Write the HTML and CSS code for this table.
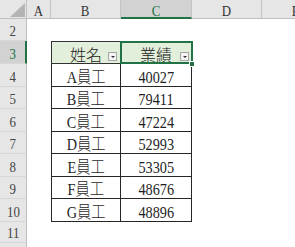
FILE: index.html
```html
<!DOCTYPE html>
<html lang="zh-Hant">
<head>
<meta charset="utf-8">
<title>Sheet</title>
<link rel="stylesheet" href="styles.css">
</head>
<body>
<div class="sheet">
  <div class="corner"><svg width="15" height="14" viewBox="0 0 15 14"><polygon points="15,0 15,14 0,14" fill="#b4b4b4"/></svg></div>
  <div class="ch"><span class="s">A</span></div>
  <div class="ch"><span class="s">B</span></div>
  <div class="ch sel"><span class="s">C</span></div>
  <div class="ch"><span class="s">D</span></div>
  <div class="ch"><span class="s">E</span></div>

  <div class="rh"><span class="s">2</span></div>
  <div></div><div></div><div></div><div></div><div></div>

  <div class="rh sel"><span class="s">3</span></div>
  <div></div>
  <div class="th first"><span>姓名</span><span class="dd"></span></div>
  <div class="th active"><span>業績</span><span class="dd"></span></div>
  <div></div><div></div>

  <div class="rh"><span class="s">4</span></div>
  <div></div>
  <div class="td first"><span class="t">A員工</span></div>
  <div class="td"><span class="t">40027</span></div>
  <div></div><div></div>

  <div class="rh"><span class="s">5</span></div>
  <div></div>
  <div class="td first"><span class="t">B員工</span></div>
  <div class="td"><span class="t">79411</span></div>
  <div></div><div></div>

  <div class="rh"><span class="s">6</span></div>
  <div></div>
  <div class="td first"><span class="t">C員工</span></div>
  <div class="td"><span class="t">47224</span></div>
  <div></div><div></div>

  <div class="rh"><span class="s">7</span></div>
  <div></div>
  <div class="td first"><span class="t">D員工</span></div>
  <div class="td"><span class="t">52993</span></div>
  <div></div><div></div>

  <div class="rh"><span class="s">8</span></div>
  <div></div>
  <div class="td first"><span class="t">E員工</span></div>
  <div class="td"><span class="t">53305</span></div>
  <div></div><div></div>

  <div class="rh"><span class="s">9</span></div>
  <div></div>
  <div class="td first"><span class="t">F員工</span></div>
  <div class="td"><span class="t">48676</span></div>
  <div></div><div></div>

  <div class="rh"><span class="s">10</span></div>
  <div></div>
  <div class="td first"><span class="t">G員工</span></div>
  <div class="td"><span class="t">48896</span></div>
  <div></div><div></div>

  <div class="rh"><span class="s">11</span></div>
  <div></div><div></div><div></div><div></div><div></div>

  <div class="rh"></div>
  <div></div><div></div><div></div><div></div><div></div>
</div>
</body>
</html>
```
FILE: styles.css
```css
* { box-sizing: border-box; }
html, body {
  margin: 0;
  padding: 0;
  background: #ffffff;
  overflow: hidden;
}
.sheet {
  display: grid;
  grid-template-columns: 27px 24px 70px 71px 70px 68px;
  grid-template-rows: 19px 22px 23px 23px 22px 23px 22px 23px 22px 23px 21px 22px;
  width: 330px;
  font-family: "Liberation Serif", "Noto Sans CJK TC", serif;
}
.corner {
  background: #e6e6e6;
  border-right: 1px solid #bfbfbf;
  border-bottom: 1px solid #bfbfbf;
  display: flex;
  justify-content: flex-end;
  align-items: flex-end;
  padding: 0 1px 1px 0;
}
.corner svg { display: block; }
.s {
  display: inline-block;
  transform: scaleX(0.86);
}
.ch {
  background: #e6e6e6;
  border-right: 1px solid #c4c4c4;
  border-bottom: 1px solid #bfbfbf;
  color: #333333;
  font-size: 15px;
  display: flex;
  justify-content: center;
  align-items: flex-end;
  white-space: nowrap;
}
.ch .s { line-height: 13px; }
.ch.sel {
  background: #d2d2d2;
  color: #217346;
  border-bottom: 2px solid #217346;
}
.ch.sel .s { margin-bottom: -1px; }
.rh {
  background: #e6e6e6;
  border-right: 1px solid #bfbfbf;
  border-bottom: 1px solid #d6d6d6;
  color: #444444;
  font-size: 15px;
  display: flex;
  justify-content: center;
  align-items: flex-end;
  padding-bottom: 1px;
}
.rh .s { line-height: 15px; }
.rh.sel {
  background: #d2d2d2;
  color: #217346;
  border-right: 2px solid #217346;
}
.th {
  position: relative;
  background: #e2efda;
  border-top: 1px solid #333333;
  border-right: 1px solid #333333;
  border-bottom: 1px solid #333333;
  font-family: "Noto Sans CJK TC", sans-serif;
  font-weight: 300;
  font-size: 16px;
  line-height: 16px;
  color: #222222;
  display: flex;
  justify-content: center;
  align-items: flex-end;
  padding-bottom: 1px;
}
.th.first { border-left: 1px solid #333333; }
.dd {
  position: absolute;
  right: 3px;
  bottom: 2px;
  width: 9px;
  height: 9px;
  background: #f4f4f4;
  border: 1px solid #a6a6a6;
  display: flex;
  justify-content: center;
  align-items: center;
  padding-top: 1px;
}
.dd::after {
  content: "";
  border-left: 2px solid transparent;
  border-right: 2px solid transparent;
  border-top: 2px solid #333333;
}
.th.active .dd { right: 2px; }
.th.active::before {
  content: "";
  position: absolute;
  left: -1px;
  top: -1px;
  right: -2px;
  bottom: -1px;
  border: 2px solid #217346;
}
.th.active::after {
  content: "";
  position: absolute;
  right: -4px;
  bottom: -4px;
  width: 4px;
  height: 4px;
  background: #217346;
  border: 1px solid #ffffff;
  box-sizing: content-box;
}
.td {
  border-right: 1px solid #262626;
  border-bottom: 1px solid #262626;
  color: #1f1f1f;
  font-size: 17px;
  font-weight: 300;
  display: flex;
  justify-content: center;
  align-items: flex-end;
  white-space: nowrap;
}
.td.first { border-left: 1px solid #262626; }
.t {
  display: inline-block;
  line-height: 17px;
  transform: scaleX(0.84);
}
```
